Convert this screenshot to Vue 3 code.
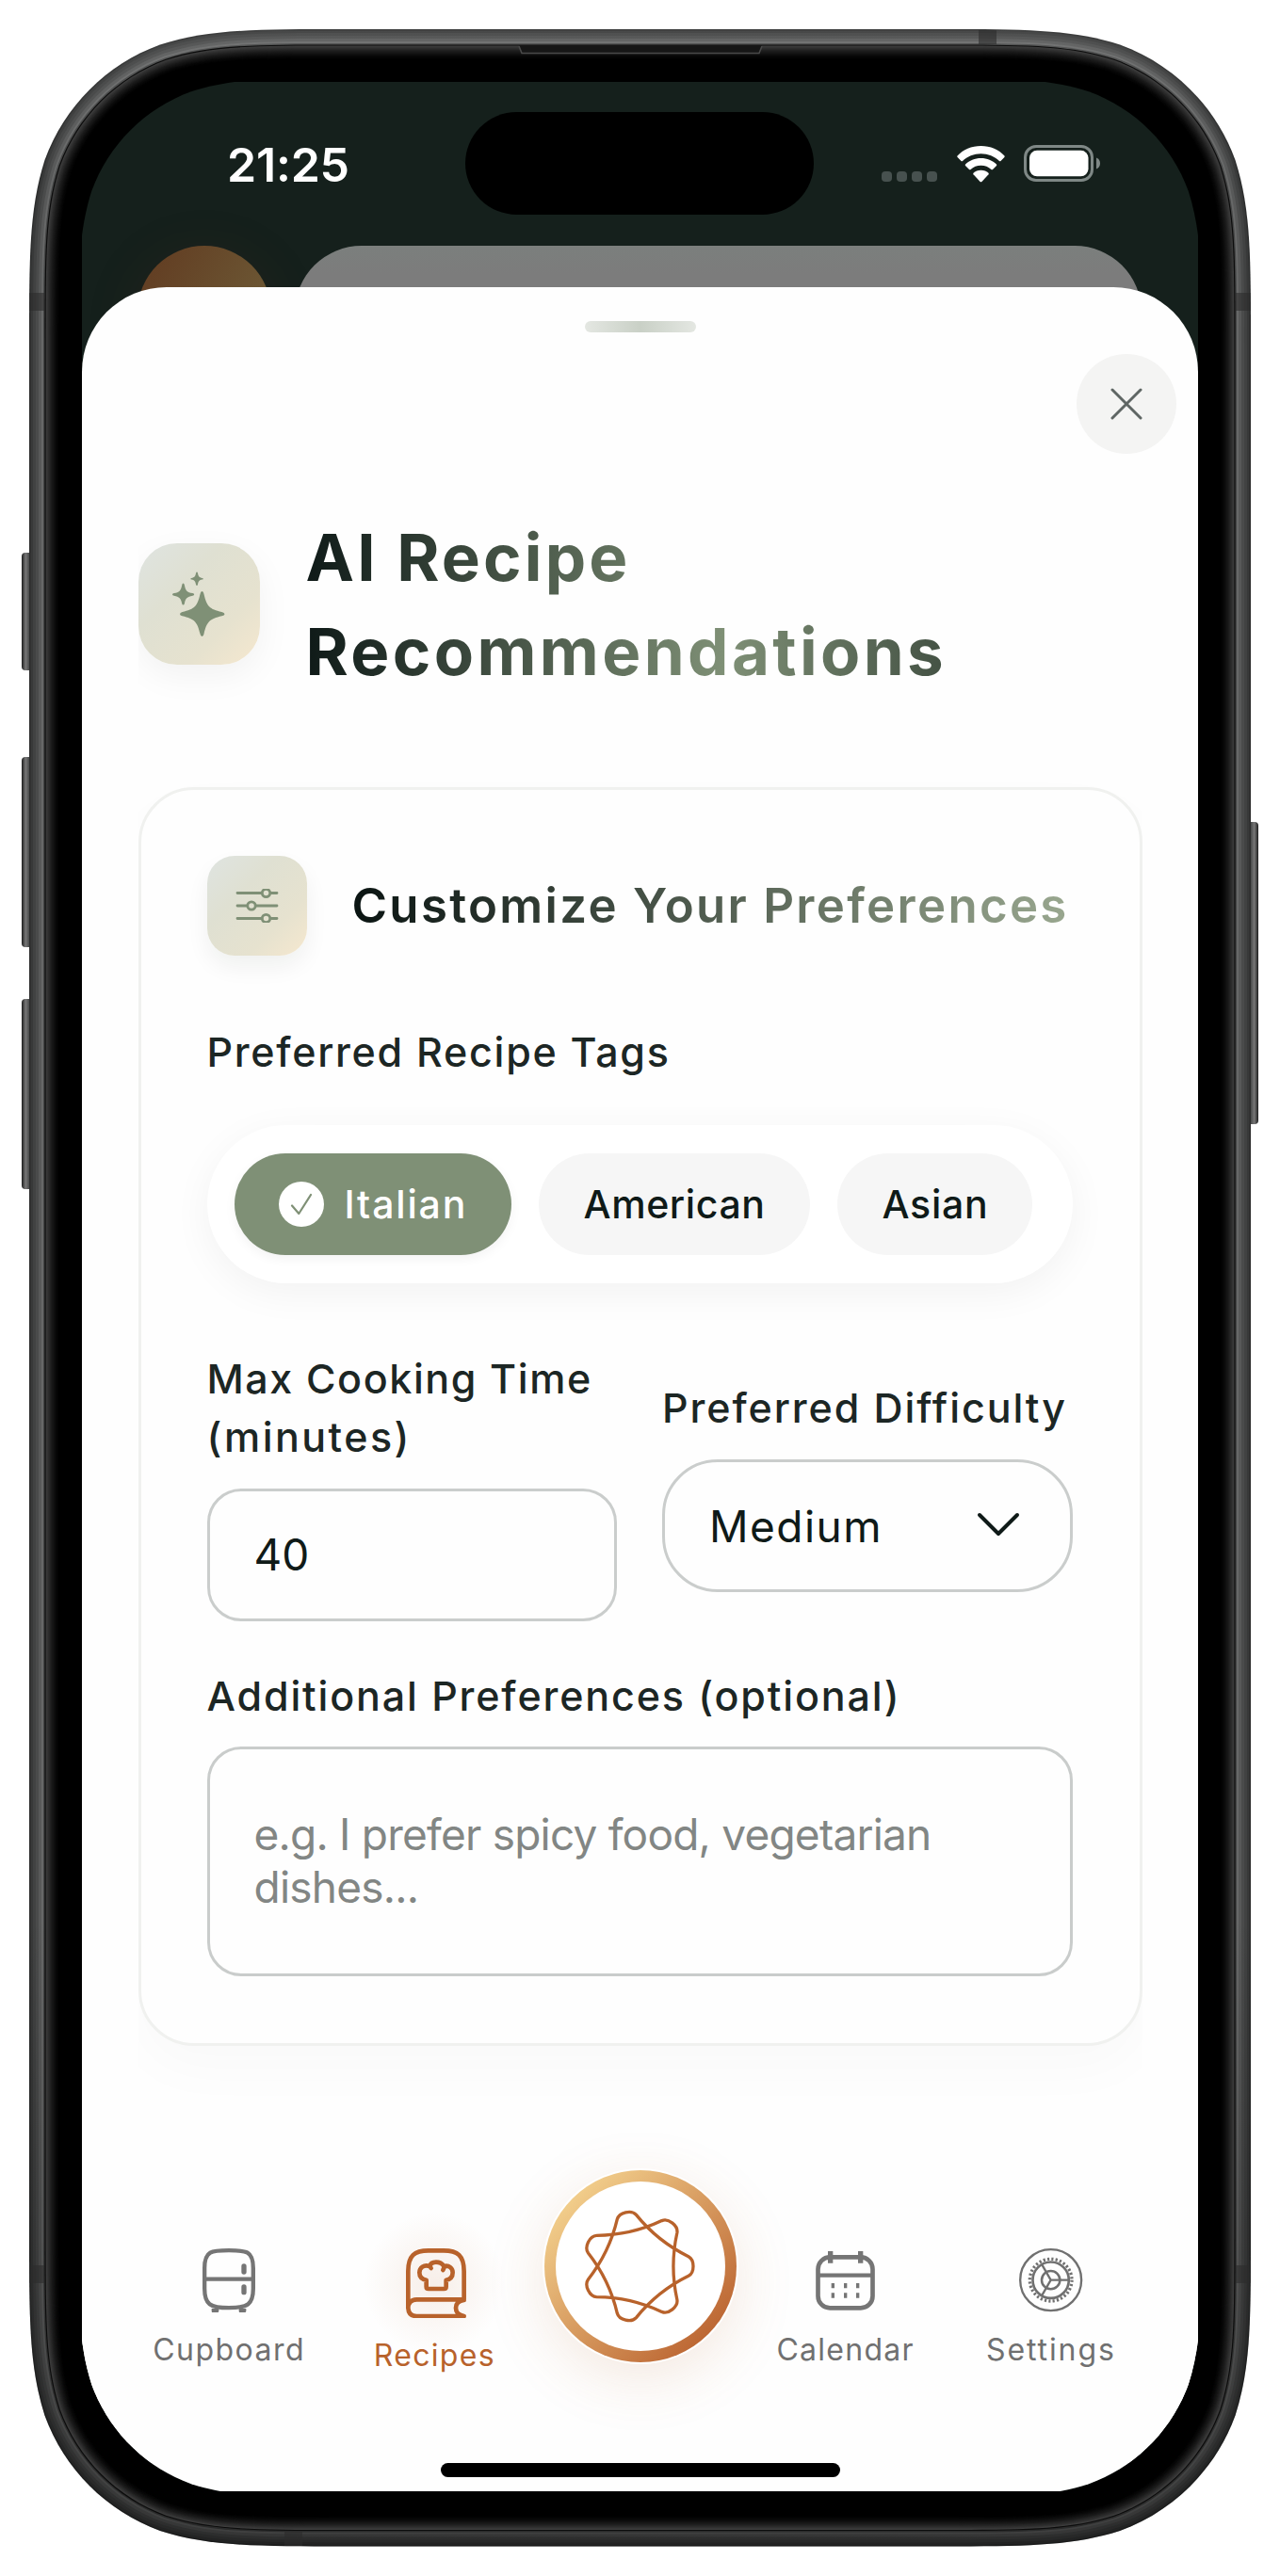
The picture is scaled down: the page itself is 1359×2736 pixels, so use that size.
<script setup>
import { ref } from 'vue'

/* Rounded rectangle with continuous (smoothed) corners */
function smooth(x, y, w, h, r) {
  const a = 1.52866 * r, b = 1.08849 * r, c = 0.86841 * r, d = 0.63149 * r
  const e = 0.37282 * r, f = 0.16906 * r, g = 0.07491 * r
  const X = x + w, Y = y + h
  return `M${x + a} ${y}L${X - a} ${y}C${X - b} ${y} ${X - c} ${y} ${X - d} ${y + g}` +
    `C${X - e} ${y + f} ${X - f} ${y + e} ${X - g} ${y + d}C${X} ${y + c} ${X} ${y + b} ${X} ${y + a}` +
    `L${X} ${Y - a}C${X} ${Y - b} ${X} ${Y - c} ${X - g} ${Y - d}` +
    `C${X - f} ${Y - e} ${X - e} ${Y - f} ${X - d} ${Y - g}C${X - c} ${Y} ${X - b} ${Y} ${X - a} ${Y}` +
    `L${x + a} ${Y}C${x + b} ${Y} ${x + c} ${Y} ${x + d} ${Y - g}` +
    `C${x + e} ${Y - f} ${x + f} ${Y - e} ${x + g} ${Y - d}C${x} ${Y - c} ${x} ${Y - b} ${x} ${Y - a}` +
    `L${x} ${y + a}C${x} ${y + b} ${x} ${y + c} ${x + g} ${y + d}` +
    `C${x + f} ${y + e} ${x + e} ${y + f} ${x + d} ${y + g}C${x + c} ${y} ${x + b} ${y} ${x + a} ${y}Z`
}
const inset = (i, r = 220) => smooth(31 + i, 31 + i, 1297 - 2 * i, 2673.5 - 2 * i, r - i)

const metal = [
  [0, '#2c2d2d'], [1.5, '#383939'], [4, '#414242'], [7, '#4a4b4b'], [10, '#585959'],
  [13, '#676868'], [15, '#454646'], [16.4, '#0c0c0c'],
].map(([i, fill]) => ({ d: inset(i), fill }))
const bezel = Array.from({ length: 16 }, (_, k) => {
  const v = Math.round(60 * Math.pow(1 - k / 15, 1.6))
  return { d: inset(17.6 + k), fill: `rgb(${v},${v},${v})` }
})
const screenClip = { clipPath: `path("${smooth(-4, -4, 1193, 2569.5, 190)}")` }

/* Seven-pointed interlaced star */
function star() {
  const rot = (x, y, t) => `${(x * Math.cos(t) - y * Math.sin(t)).toFixed(1)} ${(x * Math.sin(t) + y * Math.cos(t)).toFixed(1)}`
  const s = (2 * Math.PI) / 7
  let p = `M${rot(161, 31, 0)}`
  for (let k = 0; k < 7; k++) {
    const t = -2 * s * k
    p += `C${rot(181, 20, t)} ${rot(181, -20, t)} ${rot(161, -31, t)}`
    p += `Q${rot(101, 0, t - s)} ${rot(161, 31, t - 2 * s)}`
  }
  return p + 'Z'
}
const starPath = star()

const tags = ref([
  { name: 'Italian', on: true, cls: 'it' },
  { name: 'American', on: false, cls: 'am' },
  { name: 'Asian', on: false, cls: 'as' },
])
</script>

<template>
  <div class="stage">
    <svg class="frame" width="1359" height="2736" viewBox="0 0 1359 2736" aria-hidden="true">
      <defs>
        <linearGradient id="btnL" x1="0" x2="1">
          <stop offset="0" stop-color="#1c1d1d" /><stop offset=".3" stop-color="#777" />
          <stop offset=".6" stop-color="#444646" /><stop offset="1" stop-color="#2c2e2e" />
        </linearGradient>
        <linearGradient id="btnR" x1="1" x2="0">
          <stop offset="0" stop-color="#1c1d1d" /><stop offset=".3" stop-color="#777" />
          <stop offset=".6" stop-color="#444646" /><stop offset="1" stop-color="#2c2e2e" />
        </linearGradient>
        <linearGradient id="shade" x1="0" y1="0" x2="0" y2="1">
          <stop offset="0" stop-color="#fff" stop-opacity=".08" />
          <stop offset=".06" stop-color="#fff" stop-opacity="0" />
          <stop offset=".75" stop-color="#000" stop-opacity="0" />
          <stop offset="1" stop-color="#000" stop-opacity=".4" />
        </linearGradient>
      </defs>
      <g fill="url(#btnL)">
        <rect x="23" y="587" width="14" height="125" rx="4" />
        <rect x="23" y="804" width="14" height="202" rx="4" />
        <rect x="23" y="1061" width="14" height="202" rx="4" />
      </g>
      <rect x="1322" y="873" width="14" height="321" rx="4" fill="url(#btnR)" />
      <path v-for="(m, i) in metal.slice(0, 7)" :key="'m' + i" :d="m.d" :fill="m.fill" />
      <path :d="inset(0)" fill="url(#shade)" />
      <g fill="#2b2c2c" opacity=".6">
        <rect x="31" y="311" width="16" height="19" /><rect x="1312" y="311" width="16" height="19" />
        <rect x="31" y="2406" width="16" height="19" /><rect x="1312" y="2406" width="16" height="19" />
        <rect x="1039" y="32" width="19" height="15" /><rect x="302" y="2689" width="19" height="15" />
      </g>
      <path :d="metal[7].d" :fill="metal[7].fill" />
      <path v-for="(b, i) in bezel" :key="'b' + i" :d="b.d" :fill="b.fill" />
      <path d="M551 48H809L805 57H555Z" fill="#161616" />
      <path d="M551 49L554 56.5H806L809 49" fill="none" stroke="#4a4a4a" stroke-width="1.5" />
    </svg>

    <main class="screen" :style="screenClip">
      <div class="status">
        <span class="time">21:25</span>
        <span class="island"></span>
        <span class="dots"><i></i><i></i><i></i><i></i></span>
        <svg class="wifi" width="51" height="39" viewBox="0 0 51 39" fill="#fff">
          <path d="M25.5 0C35.500 0 44.500 4 50.500 10.500Q51 11.200 50.400 12L46.500 16Q45.800 16.600 45 16C40 11 33 8.200 25.500 8.200S11 11 6 16Q5.200 16.600 4.500 16L.6 12Q0 11.200 .5 10.500C6.500 4 15.500 0 25.500 0Z" />
          <path d="M25.500 13C32 13 37.700 15.500 42 19.500Q42.600 20.300 42 21L38 25Q37.200 25.700 36.400 25C33.500 22.300 29.800 20.800 25.500 20.800S17.500 22.300 14.600 25Q13.800 25.700 13 25L9 21Q8.400 20.300 9 19.500C13.300 15.500 19 13 25.500 13Z" />
          <path d="M25.500 25.800C28.800 25.800 31.500 27 33.500 28.800Q34.100 29.500 33.500 30.200L26.400 37.900Q25.500 38.700 24.600 37.900L17.500 30.200Q16.900 29.500 17.500 28.800C19.500 27 22.200 25.800 25.500 25.800Z" />
        </svg>
        <svg class="battery" width="82" height="39" viewBox="0 0 82 39">
          <rect x="1.500" y="1.500" width="71" height="36" rx="11.500" fill="none" stroke="#7f8886" stroke-width="3" />
          <rect x="6" y="5.800" width="62.500" height="27.500" rx="8" fill="#fff" />
          <path d="M77 13.500C79.600 14.500 81 16.800 81 19.500S79.600 24.500 77 25.500Z" fill="#7f8886" />
        </svg>
      </div>
      <div class="behind">
        <span class="avatar"></span>
        <span class="search"></span>
      </div>

      <section class="sheet">
        <div class="handle"></div>
        <button class="close" aria-label="Close">
          <svg width="34" height="34" viewBox="0 0 34 34" stroke="#5f6664" stroke-width="3" stroke-linecap="round">
            <path d="M2 2L32 32M32 2L2 32" />
          </svg>
        </button>

        <div class="scroll">
          <header class="title">
            <span class="badge big">
              <svg width="58" height="72" viewBox="0 0 58 72" fill="#7f9076">
                <path d="M33.500 24Q35 24 35.500 27C38.500 40 41.500 43 54.500 46Q57.500 46.700 57.500 48.200T54.500 50.300C41.500 53.300 38.500 56.500 35.500 69.300Q35 72 33.500 72T31.500 69.300C28.500 56.500 25.500 53.300 12.500 50.300Q10 49.700 10 48.200T12.500 46C25.500 43 28.500 40 31.500 27Q32 24 33.500 24Z" />
                <path d="M13.500 15.500Q14.500 15.500 14.900 17.500C16 23.500 17.500 25 23.500 26.100Q25.200 26.500 25.200 27.400T23.500 28.700C17.500 29.900 16 31.300 14.900 37Q14.500 38.500 13.500 38.500T12.200 37C11 31.300 9.500 29.900 3.800 28.700Q2 28.300 2 27.400T3.800 26.100C9.500 25 11 23.500 12.200 17.500Q12.500 15.500 13.500 15.500Z" />
                <path d="M28 3.500Q28.700 3.500 28.900 4.500C29.700 8.500 30.600 9.200 33.700 9.900Q35 10.200 35 10.800T33.700 11.600C30.600 12.300 29.700 13.300 28.900 17Q28.600 18 28 18T27.100 17C26.300 13.300 25.400 12.300 22.300 11.600Q21.200 11.300 21.200 10.800T22.300 9.900C25.400 9.200 26.300 8.500 27.100 4.500Q27.300 3.500 28 3.500Z" />
              </svg>
            </span>
            <h1><span class="l1">AI Recipe</span><br />Recommendations</h1>
          </header>

          <div class="card">
            <div class="cardhead">
              <span class="badge small">
                <svg width="48" height="36" viewBox="0 0 48 36" fill="none" stroke="#7f9076" stroke-width="2.800" stroke-linecap="round">
                  <path d="M3 4.500H29M39 4.500H45M3 18H13M23 18H45M3 31.500H29M39 31.500H45" />
                  <circle cx="33.500" cy="4.500" r="4.200" /><circle cx="18" cy="18" r="4.200" /><circle cx="33.500" cy="31.500" r="4.200" />
                </svg>
              </span>
              <h2>Customize Your Preferences</h2>
            </div>

            <label class="lbl t1">Preferred Recipe Tags</label>
            <div class="tags">
              <div v-for="t in tags" :key="t.name" class="chip" :class="[{ on: t.on }, t.cls]">
                <span v-if="t.on" class="check">
                  <svg width="24" height="26" viewBox="0 0 24 26" fill="none" stroke="#7f9076" stroke-width="2.200" stroke-linecap="round" stroke-linejoin="round">
                    <path d="M2 14.500L9.300 23L22 3" />
                  </svg>
                </span>{{ t.name }}
              </div>
            </div>

            <div class="row">
              <div class="field">
                <label class="lbl"><span class="m1">Max Cooking Time</span><br /><span class="m2">(minutes)</span></label>
                <div class="input num">40</div>
              </div>
              <div class="field">
                <label class="lbl d1">Preferred Difficulty</label>
                <div class="input select">
                  <span>Medium</span>
                  <svg width="46" height="28" viewBox="0 0 46 28" fill="none" stroke="#0f1a18" stroke-width="4" stroke-linecap="round" stroke-linejoin="round">
                    <path d="M3 4L23 24L43 4" />
                  </svg>
                </div>
              </div>
            </div>

            <label class="lbl a1">Additional Preferences (optional)</label>
            <div class="area">e.g. I prefer spicy food, vegetarian<br />dishes...</div>
          </div>
        </div>

        <nav class="nav">
          <a class="item">
            <span class="ico">
              <svg width="56" height="68.700" viewBox="256 322 168 206" fill="none" stroke="#757575" stroke-width="13">
                <path d="M340 328.500C395 328.500 417.500 330 417.500 385V450C417.500 500 400 511.500 340 511.500S262.500 500 262.500 450V385C262.500 330 285 328.500 340 328.500ZM262 420H418" />
                <path d="M388 379V397M388 445V462" stroke-width="16" stroke-linecap="round" />
                <path d="M285 514H308V522Q306 528 300 528H292Q286 528 285 522ZM372 514H395V522Q393 528 387 528H379Q373 528 372 522Z" fill="#757575" stroke="none" />
              </svg>
            </span>
            <span class="name n1">Cupboard</span>
          </a>
          <a class="item active">
            <span class="ico">
              <svg width="64.300" height="74.700" viewBox="903 322 193 224" fill="none" stroke="#b8622b" stroke-width="14" stroke-linecap="round" stroke-linejoin="round">
                <path d="M910 512V395C910 345 930 329 975 329H1023C1068 329 1088 345 1088 395V485H937C919 486 910 496 910 512C911 528 920 538 937 538H1088M1088 487Q1062 490 1062 512Q1062 533 1088 538" />
                <path d="M975 451H1024Q1031 451 1031 444V423C1046 420 1052 411 1052 399C1052 385 1041 376 1027 378L1021 391M1024 379C1018 370 1010 366 999 366C988 366 981 370 979 379C960 372 946 384 946 399C946 411 953 420 968 423V444Q968 451 975 451M979 379L983 385" />
              </svg>
            </span>
            <span class="name n2">Recipes</span>
          </a>
          <a class="orb">
            <span class="disc">
              <svg width="120" height="120" viewBox="-172 -180 360 360" fill="none" stroke="#b8622b" stroke-width="10" stroke-linejoin="round">
                <path :d="starPath" />
              </svg>
            </span>
          </a>
          <a class="item">
            <span class="ico">
              <svg width="63" height="63" viewBox="198 155 189 189" fill="none" stroke="#757575" stroke-width="14">
                <rect x="205.500" y="174" width="174" height="162" rx="38" />
                <path d="M205 232H380" stroke-width="13" />
                <path d="M245 155V193M341 155V193" stroke-width="16" />
                <path d="M253 257V273M293 257V273M332 257V273M253 288V304M293 288V304M332 288V304" stroke-width="10" />
              </svg>
            </span>
            <span class="name n3">Calendar</span>
          </a>
          <a class="item">
            <span class="ico">
              <svg width="67.300" height="67.300" viewBox="846 144 202 202" fill="none" stroke="#707070">
                <circle cx="947" cy="245" r="97.500" stroke-width="7" />
                <circle cx="947" cy="245" r="67" stroke-width="10" stroke-dasharray="6.580 6.576" />
                <circle cx="947" cy="245" r="57.500" stroke-width="8" />
                <circle cx="947" cy="245" r="29" stroke-width="7.500" />
                <path d="M947 245H1004M947 245L918.500 195.600M947 245L918.500 294.400" stroke-width="7" />
              </svg>
            </span>
            <span class="name n4">Settings</span>
          </a>
        </nav>
        <div class="home"></div>
      </section>
    </main>
  </div>
</template>

<style>
body { margin: 0; background: #fff; }
</style>

<style scoped>
* { box-sizing: border-box; }
.stage {
  position: relative;
  width: 1359px;
  height: 2736px;
  padding: 87px;
  overflow: hidden;
  font-family: Inter, "Noto Sans", sans-serif;
  color: #0f1a18;
}
.frame { position: absolute; left: 0; top: 0; }
.screen {
  position: relative;
  width: 1185px;
  height: 2559px;
  background: #15201c;
  overflow: hidden;
  display: flex;
  flex-direction: column;
}
.status { display: flex; align-items: flex-start; height: 174px; padding-left: 154px; flex: none; }
.time { width: 253px; margin-top: 57px; color: #fff; font-size: 50px; line-height: 62px; font-weight: 600; letter-spacing: -.2px; }
.island { width: 370px; height: 109px; margin-top: 32px; border-radius: 55px; background: #000; }
.dots { display: flex; gap: 5px; margin: 95px 21px 0 72px; }
.dots i { width: 11px; height: 11px; border-radius: 4px; background: #47514f; }
.wifi { margin-top: 68px; }
.battery { margin: 67px 0 0 20px; }
.behind { display: flex; gap: 25px; padding-left: 59px; height: 44px; flex: none; }
.avatar { flex: none; width: 142px; height: 142px; border-radius: 50%; background: linear-gradient(120deg, #613a20, #6c5734 75%); box-shadow: 0 12px 60px rgba(120, 60, 30, .14); }
.search { flex: none; width: 899px; height: 142px; border-radius: 71px; background: linear-gradient(#7b7f7d, #7c7c7c 30px); }

.sheet {
  position: relative;
  flex: 1;
  display: flex;
  flex-direction: column;
  background: #fefefe;
  border-radius: 90px 90px 0 0;
}
.handle { width: 118px; height: 12px; margin: 35.500px auto 0; border-radius: 6px; background: linear-gradient(90deg, #e4e7e2, #c9d0c6, #e4e7e2); flex: none; }
.close {
  display: flex; align-items: center; justify-content: center;
  width: 106px; height: 106px; margin: 23.500px 23.500px 0 auto; padding: 0;
  border: 0; border-radius: 50%; background: #f4f4f3; flex: none;
}
.scroll { flex: none; height: 1806px; margin: 0 59.500px 0 59.500px; padding-top: 60px; overflow: hidden; }
.title { display: flex; align-items: center; gap: 49px; }
.badge {
  display: flex; align-items: center; justify-content: center; flex: none;
  background: linear-gradient(135deg, #dfe4e1 0%, #dfe0d2 35%, #e6e2cf 70%, #f6e8cf 100%);
}
.big { width: 129px; height: 129px; margin-top: -2px; border-radius: 41px; box-shadow: 0 12px 36px rgba(15, 26, 24, .05); }
.big svg { margin: -2px 0 0 -2px; }
.small { width: 106px; height: 106px; border-radius: 29px; box-shadow: 0 12px 24px rgba(15, 26, 24, .06); }
h1 {
  flex: 1; margin: 0; font-size: 69px; line-height: 100px; font-weight: 700; letter-spacing: 3.380px; white-space: nowrap;
  color: transparent; background: linear-gradient(90deg, #0f1a18, #7f9076 50%, #0f1a18); background-clip: text; -webkit-background-clip: text;
}
.l1 { letter-spacing: 3.150px; }
.card {
  height: 1337px; margin-top: 93.500px; padding: 70px 70px 0;
  border: 3px solid #f0f1ef; border-radius: 59px; background: #fefefe;
  box-shadow: 0 24px 60px rgba(15, 26, 24, .022);
}
.cardhead { display: flex; align-items: center; gap: 48px; }
h2 {
  margin: 0; flex: 1; font-size: 51px; line-height: 70px; font-weight: 600; letter-spacing: 2.290px; white-space: nowrap;
  color: transparent; background: linear-gradient(90deg, #0a1412, #9aa890); background-clip: text; -webkit-background-clip: text;
}
.lbl { display: block; font-size: 43px; line-height: 62px; font-weight: 500; color: #1c2624; white-space: nowrap; }
.t1 { margin-top: 71.500px; letter-spacing: 1.720px; }
.m1 { letter-spacing: 1.600px; }
.m2 { letter-spacing: 2.450px; }
.d1 { letter-spacing: 1.920px; }
.a1 { margin-top: 48px; letter-spacing: 1.860px; }
.tags {
  display: flex; align-items: center; gap: 29px; width: 919px; height: 168px; margin-top: 46.500px; padding: 0 29px;
  border-radius: 84px; background: #fff; box-shadow: 0 10px 42px rgba(15, 26, 24, .05);
}
.chip {
  display: flex; align-items: center; height: 108px; padding: 0 48px; border-radius: 54px;
  background: #f6f6f6; font-size: 41px; font-weight: 500; letter-spacing: .6px;
}
.chip.on { background: #7f9076; color: #fff; box-shadow: 0 4px 12px rgba(15, 26, 24, .05); }
.chip.it { width: 294px; padding-right: 0; letter-spacing: 1.850px; }
.chip.am { width: 288px; padding-right: 0; }
.chip.as { width: 207px; padding-right: 0; letter-spacing: .700px; }
.check { display: flex; align-items: center; justify-content: center; width: 48px; height: 48px; margin: 0 22px 0 -1px; border-radius: 50%; background: #fff; }
.row { display: flex; align-items: center; justify-content: space-between; width: 919px; margin-top: 70.500px; }
.field { width: 435.500px; }
.input {
  display: flex; align-items: center; justify-content: space-between; height: 140.500px; margin-top: 24px; padding: 0 53px 0 47px;
  border: 3px solid #cacdcc; border-radius: 36px; font-size: 46px; line-height: 56px;
}
.select { border-radius: 59px; letter-spacing: 1.450px; }
.select span { padding-top: 2px; }
.select svg { margin-top: -3px; }
.area {
  width: 919px; height: 244px; margin-top: 23.500px; padding: 62px 46px 0 47px;
  border: 3px solid #c9cccb; border-radius: 36px;
  font-size: 46px; line-height: 56px; letter-spacing: -.780px; color: #828684; white-space: nowrap;
}

.nav { display: flex; align-items: flex-start; height: 328px; padding: 0 47px; background: #fefefe; position: relative; flex: none; }
.item { flex: 1; display: flex; flex-direction: column; align-items: center; padding-top: 98px; color: #707070; }
.ico { position: relative; display: flex; align-items: center; justify-content: center; height: 72px; }
.active { color: #b8622b; }
.active .ico { height: 78px; }
.active .ico::before {
  content: ""; position: absolute; left: 50%; top: 50%; width: 150px; height: 150px; margin: -75px 0 0 -75px;
  background: radial-gradient(closest-side, rgba(184, 98, 43, .1), rgba(184, 98, 43, .05) 50%, rgba(184, 98, 43, 0));
}
.active .ico svg { left: 2px; }
.ico svg { position: relative; display: block; }
.name { margin-top: 17.700px; font-size: 32px; line-height: 40px; font-weight: 400; white-space: nowrap; }
.n1 { letter-spacing: 1.450px; }
.n2 { letter-spacing: 1.300px; }
.n3 { letter-spacing: 1.250px; }
.n4 { letter-spacing: 1.900px; }
.orb {
  flex: none; width: 204px; height: 204px; margin: 17px 7px 0; padding: 12px; border-radius: 50%;
  background: linear-gradient(135deg, #f6d692 8%, #bb6431 88%);
  box-shadow: 0 0 0 2px #fff, 0 16px 64px rgba(184, 98, 43, .15);
}
.disc { display: flex; align-items: center; justify-content: center; width: 180px; height: 180px; border-radius: 50%; background: #fff; }
.home { width: 424px; height: 15px; margin: 0 auto; border-radius: 8px; background: #000; flex: none; }
</style>
